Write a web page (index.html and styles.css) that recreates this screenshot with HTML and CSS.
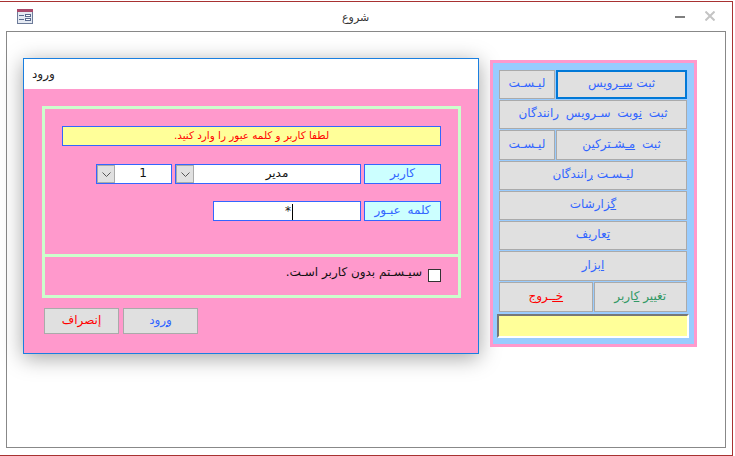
FILE: index.html
```html
<!DOCTYPE html>
<html lang="fa">
<head>
<meta charset="utf-8">
<title>شروع</title>
<link rel="stylesheet" href="styles.css">
</head>
<body>
<div class="window">
  <header class="titlebar">
    <svg class="app-icon" width="16" height="15" viewBox="0 0 16 15">
      <rect x="0.5" y="0.5" width="15" height="14" fill="#e4e9f2" stroke="#6d7b99"/>
      <rect x="0" y="0" width="16" height="3" fill="#a8496b"/>
      <path d="M2 6.5h5M2 10.5h5" stroke="#5a6a8e" stroke-width="1"/>
      <rect x="8.5" y="5.5" width="5" height="2" fill="#fff" stroke="#5a6a8e"/>
      <rect x="8.5" y="9.5" width="5" height="2" fill="#fff" stroke="#5a6a8e"/>
    </svg>
    <span class="app-title" dir="rtl">شروع</span>
    <div class="controls">
      <svg class="ctl-min" width="10" height="2" viewBox="0 0 10 2"><rect width="10" height="2" fill="#7f7f7f"/></svg>
      <svg class="ctl-close" width="10" height="10" viewBox="0 0 10 10"><path d="M0.5 0.5L9.5 9.5M9.5 0.5L0.5 9.5" stroke="#c4c4c4" stroke-width="2"/></svg>
    </div>
  </header>
  <main class="frame">
    <section class="dialog">
      <div class="dialog-title" dir="rtl">ورود</div>
      <div class="dialog-body">
        <div class="group">
          <div class="group-main">
            <div class="notice" dir="rtl">لطفا کاربر و کلمه عبور را وارد کنید.</div>
            <div class="field-row first">
              <div class="combo small">
                <span class="combo-btn"><svg width="9" height="5" viewBox="0 0 9 5"><path d="M0.5 0.5L4.5 4.5L8.5 0.5" fill="none" stroke="#555"/></svg></span>
                <span class="combo-value">1</span>
              </div>
              <div class="combo large">
                <span class="combo-btn"><svg width="9" height="5" viewBox="0 0 9 5"><path d="M0.5 0.5L4.5 4.5L8.5 0.5" fill="none" stroke="#555"/></svg></span>
                <span class="combo-value" dir="rtl">مدیر</span>
              </div>
              <label class="field-label" dir="rtl">کاربر</label>
            </div>
            <div class="field-row second">
              <div class="password"><span>*</span><i class="caret"></i></div>
              <label class="field-label spaced" dir="rtl">کلمه عبـور</label>
            </div>
          </div>
          <div class="group-foot">
            <span class="check-text" dir="rtl">سیـسـتم بدون کاربر اسـت.</span>
            <span class="checkbox"></span>
          </div>
        </div>
        <div class="dialog-actions">
          <button class="btn dialog-btn red" dir="rtl"><u>إ</u>نصراف</button>
          <button class="btn dialog-btn blue" dir="rtl"><u>و</u>رود</button>
        </div>
      </div>
    </section>
    <nav class="panel">
      <div class="menu">
        <div class="menu-row h29">
          <button class="btn blue list-btn" dir="rtl">لیـسـت</button>
          <button class="btn blue grow active" dir="rtl">ثبت <u>سـ</u>رویس</button>
        </div>
        <div class="menu-row h29">
          <button class="btn blue grow wide-words" dir="rtl">ثبت <u>ن</u>وبت سـرویس رانندگان</button>
        </div>
        <div class="menu-row h30">
          <button class="btn blue list-btn" dir="rtl">لیـسـت</button>
          <button class="btn blue grow spaced" dir="rtl">ثبت <u>مـ</u>شـترکین</button>
        </div>
        <div class="menu-row h29">
          <button class="btn blue grow" dir="rtl">لیـسـت <u>ر</u>انندگان</button>
        </div>
        <div class="menu-row h29">
          <button class="btn blue grow" dir="rtl"><u>گ</u>زارشات</button>
        </div>
        <div class="menu-row h29">
          <button class="btn blue grow" dir="rtl"><u>ت</u>عاریف</button>
        </div>
        <div class="menu-row h30">
          <button class="btn blue grow" dir="rtl"><u>ا</u>بزار</button>
        </div>
        <div class="menu-row h30">
          <button class="btn red half" dir="rtl"><u>خـ</u>ـروج</button>
          <button class="btn green half" dir="rtl">تغییر <u>ک</u>اربر</button>
        </div>
      </div>
      <div class="status"></div>
    </nav>
  </main>
</div>
</body>
</html>
```
FILE: styles.css
```css
* { box-sizing: border-box; }
html, body { margin: 0; padding: 0; background: #fff; }
body {
  width: 735px;
  height: 456px;
  overflow: hidden;
  padding-top: 1px;
  font-family: "DejaVu Sans", sans-serif;
  font-size: 11px;
}
.window {
  width: 733px;
  height: 455px;
  border: 1px solid #a83232;
  border-left: 0;
  display: flex;
  flex-direction: column;
}
.titlebar {
  height: 29px;
  display: flex;
  align-items: flex-start;
  flex: none;
}
.app-icon { margin: 7px 0 0 17px; flex: none; }
.app-title { margin: 8px 0 0 309px; font-size: 11px; line-height: 16px; color: #333; }
.controls { margin-left: auto; display: flex; align-items: flex-start; }
.ctl-min { margin: 14px 20px 0 0; }
.ctl-close { margin: 9px 17px 0 0; }

.frame {
  width: 720px;
  height: 417px;
  margin-left: 6px;
  border: 1px solid #888;
  background: #fff;
  display: flex;
  align-items: flex-start;
  padding: 26px 0 0 16px;
}
.dialog {
  width: 456px;
  height: 296px;
  border: 1px solid #1a7fe0;
  box-shadow: 0 4px 20px rgba(0,0,0,.36);
  background: #ff99cc;
  flex: none;
}
.dialog-title {
  height: 30px;
  background: #fff;
  font-size: 12px;
  line-height: 31px;
  padding-left: 8px;
  direction: ltr;
  color: #222;
  display: flex;
  justify-content: flex-start;
}
.dialog-body { padding: 17px 0 0 18px; }
.group { width: 419px; border: 3px solid #ccffcc; }
.group-main { height: 145px; padding: 17px 17px 0; }
.notice {
  height: 20px;
  background: #ffff99;
  border: 1px solid #3366ff;
  color: #f00;
  font-size: 10.4px;
  line-height: 16px;
  text-align: center;
}
.field-row { display: flex; justify-content: flex-end; gap: 3px; height: 20px; }
.field-row.first { margin-top: 18px; }
.field-row.second { margin-top: 17px; }
.combo {
  display: flex;
  background: #fff;
  border: 1px solid #3366ff;
  height: 20px;
}
.combo.small { width: 76px; }
.combo.large { width: 186px; }
.combo-btn {
  width: 18px;
  flex: none;
  background: #e0e0e0;
  border: 1px solid #aaa;
  display: flex;
  align-items: center;
  justify-content: center;
}
.combo-value { flex: 1; text-align: center; line-height: 17px; font-size: 12px; color: #111; }
.field-label {
  width: 77px;
  height: 20px;
  background: #ccffff;
  border: 1px solid #3366ff;
  color: #3366ff;
  font-size: 12px;
  line-height: 17px;
  text-align: center;
}
.password {
  width: 148px;
  height: 20px;
  background: #fff;
  border: 1px solid #3366ff;
  padding-left: 4px;
  display: flex;
  justify-content: center;
  align-items: flex-start;
  font-size: 12px;
  line-height: 18px;
  color: #111;
}
.caret { width: 1px; height: 16px; margin: 2px 0 0 1px; background: #000; }
.group-foot {
  height: 41px;
  border-top: 3px solid #ccffcc;
  padding: 12px 17px 0 0;
  display: flex;
  justify-content: flex-end;
  align-items: flex-start;
  gap: 6px;
}
.check-text { font-size: 12px; line-height: 14px; margin-top: -4px; color: #111; }
.checkbox { width: 13px; height: 13px; background: #fff; border: 1px solid #333; flex: none; }
.dialog-actions { display: flex; gap: 4px; margin: 10px 0 0 2px; }
.btn {
  font: inherit;
  font-size: 12px;
  padding: 0 0 3px;
  background: #e0e0e0;
  border: 1px solid #aaa;
  line-height: 1;
}
.dialog-btn { width: 75px; height: 26px; }
.blue { color: #3366ff; }
.red { color: #f00; }
.green { color: #339966; }

.panel {
  width: 207px;
  margin: 2px 0 0 11px;
  border: 3px solid #ff99cc;
  background: #99ccff;
  padding: 7px 5px 6px 4px;
  flex: none;
}
.menu { margin: 0 2px; display: flex; flex-direction: column; gap: 1px; }
.menu-row { display: flex; gap: 1px; }
.h29 { height: 29px; }
.h30 { height: 30px; }
.list-btn { width: 56px; flex: none; }
.grow { flex: 1; }
.half { flex: 1; }
.wide-words { word-spacing: 3px; }
.spaced { word-spacing: 3px; }
.active { border: 2px solid #0078d7; }
.status {
  height: 24px;
  margin-top: 2px;
  background: #ffff99;
  border: 2px solid;
  border-color: #777 #fff #fff #777;
}
```
